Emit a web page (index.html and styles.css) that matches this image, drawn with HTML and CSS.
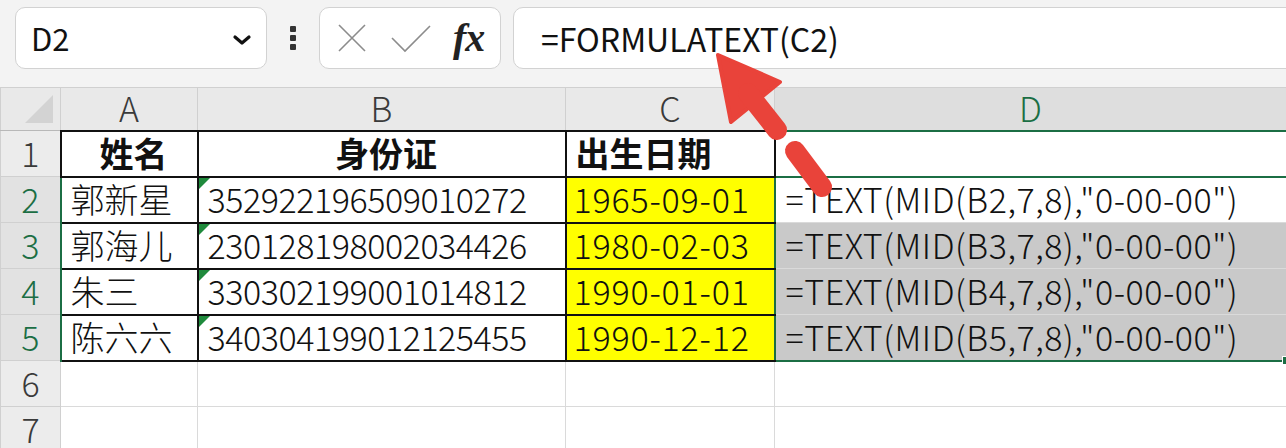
FILE: index.html
```html
<!DOCTYPE html>
<html>
<head>
    <meta charset="UTF-8">
    <title>FORMULATEXT</title>
    <link rel="stylesheet" href="styles.css">
</head>
<body>
    <div class="toolbar">
        <div class="name-box">
            <span class="cell-ref">D2</span>
            <svg class="chevron" width="20" height="12" viewBox="0 0 20 12">
                <path d="M3 3 L10 9 L17 3" fill="none" stroke="#111" stroke-width="3.2" stroke-linecap="round" stroke-linejoin="round"/>
            </svg>
        </div>
        <div class="more">
            <span></span><span></span><span></span>
        </div>
        <div class="fx-box">
            <svg class="icon-cancel" width="30" height="30" viewBox="0 0 30 30">
                <path d="M2 2 L28 28 M28 2 L2 28" stroke="#8c8c8c" stroke-width="1.6" fill="none"/>
            </svg>
            <svg class="icon-enter" width="40" height="28" viewBox="0 0 40 28">
                <path d="M1 13 L14 26 L39 1" stroke="#8c8c8c" stroke-width="1.6" fill="none"/>
            </svg>
            <span class="fx">fx</span>
        </div>
        <div class="formula-box">=FORMULATEXT(C2)</div>
    </div>

    <table class="sheet">
        <colgroup>
            <col class="col-rowhead">
            <col class="col-a">
            <col class="col-b">
            <col class="col-c">
            <col class="col-d">
        </colgroup>
        <tr class="col-heads">
            <th class="corner"><span class="corner-tri"></span></th>
            <th>A</th>
            <th>B</th>
            <th>C</th>
            <th class="head-sel">D</th>
        </tr>
        <tr>
            <th class="row-head">1</th>
            <td class="t bold center">姓名</td>
            <td class="t bold center">身份证</td>
            <td class="t bold">出生日期</td>
            <td></td>
        </tr>
        <tr>
            <th class="row-head row-sel">2</th>
            <td class="t">郭新星</td>
            <td class="t num-text">352922196509010272</td>
            <td class="t date">1965-09-01</td>
            <td class="sel sel-top">=TEXT(MID(B2,7,8),"0-00-00")</td>
        </tr>
        <tr>
            <th class="row-head row-sel">3</th>
            <td class="t">郭海儿</td>
            <td class="t num-text">230128198002034426</td>
            <td class="t date">1980-02-03</td>
            <td class="sel shade">=TEXT(MID(B3,7,8),"0-00-00")</td>
        </tr>
        <tr>
            <th class="row-head row-sel">4</th>
            <td class="t">朱三</td>
            <td class="t num-text">330302199001014812</td>
            <td class="t date">1990-01-01</td>
            <td class="sel shade">=TEXT(MID(B4,7,8),"0-00-00")</td>
        </tr>
        <tr>
            <th class="row-head row-sel">5</th>
            <td class="t">陈六六</td>
            <td class="t num-text">340304199012125455</td>
            <td class="t date">1990-12-12</td>
            <td class="sel shade sel-bottom">=TEXT(MID(B5,7,8),"0-00-00")</td>
        </tr>
        <tr>
            <th class="row-head">6</th>
            <td></td><td></td><td></td><td></td>
        </tr>
        <tr>
            <th class="row-head">7</th>
            <td></td><td></td><td></td><td></td>
        </tr>
    </table>

    <svg class="arrow" width="1286" height="448" viewBox="0 0 1286 448">
        <polygon points="718,55 780,82 731,122" fill="#e9433a" stroke="#e9433a" stroke-width="4" stroke-linejoin="round"/>
        <line x1="748" y1="93" x2="777" y2="130" stroke="#e9433a" stroke-width="20" stroke-linecap="round"/>
        <line x1="795" y1="151" x2="822" y2="187" stroke="#e9433a" stroke-width="20" stroke-linecap="round"/>
    </svg>
</body>
</html>
```

FILE: styles.css
```css
body {
    margin: 0;
    width: 1286px;
    height: 448px;
    overflow: hidden;
    position: relative;
    background-color: #f3f3f3;
    font-family: "Noto Sans CJK SC", "Noto Sans", sans-serif;
    font-weight: 300;
    color: #111;
}
.toolbar {
    height: 87px;
    box-sizing: border-box;
    padding: 7px 0 0 15px;
    display: flex;
    align-items: flex-start;
    background-color: #f3f3f3;
}
.name-box {
    width: 252px;
    height: 62px;
    box-sizing: border-box;
    padding: 0 14px 0 15px;
    display: flex;
    align-items: center;
    justify-content: space-between;
    background-color: white;
    border: 1px solid #d2d2d2;
    border-radius: 10px;
}
.cell-ref {
    font-size: 31px;
    line-height: 1.2;
    font-weight: 400;
}
.chevron {
    margin-top: 3px;
}
.more {
    width: 52px;
    height: 62px;
    display: flex;
    flex-direction: column;
    align-items: center;
    justify-content: center;
    gap: 3px;
}
.more span {
    width: 6px;
    height: 6px;
    border-radius: 1px;
    background-color: #333;
}
.fx-box {
    width: 182px;
    height: 62px;
    box-sizing: border-box;
    padding: 0 12px 0 17px;
    display: flex;
    align-items: center;
    background-color: white;
    border: 1px solid #d2d2d2;
    border-radius: 10px;
}
.icon-cancel {
    margin-right: 24px;
}
.icon-enter {
    margin-right: 22px;
    margin-top: 2px;
}
.fx {
    font-family: "Liberation Serif", serif;
    font-style: italic;
    font-weight: bold;
    font-size: 40px;
    color: #222;
    letter-spacing: -1px;
    line-height: 1.1;
}
.formula-box {
    flex: 1;
    margin-left: 12px;
    margin-right: -20px;
    height: 62px;
    box-sizing: border-box;
    padding-left: 27px;
    display: flex;
    align-items: center;
    font-size: 32px;
    font-weight: 400;
    background-color: white;
    border: 1px solid #d2d2d2;
    border-radius: 10px;
}

.sheet {
    width: 1286px;
    table-layout: fixed;
    border-collapse: collapse;
    background-color: white;
    font-size: 34px;
}
.col-rowhead { width: 60px; }
.col-a { width: 137px; }
.col-b { width: 368px; }
.col-c { width: 209px; }
.col-d { width: 512px; }

.sheet tr {
    height: 46px;
}
.sheet tr.col-heads {
    height: 43px;
}
.sheet th {
    font-weight: 300;
    color: #3a3a3a;
    background-color: #ececec;
    border: 1px solid #d0d0d0;
    padding: 0;
    line-height: 1.2;
}
.col-heads th {
    font-size: 34px;
    background-color: #e9e9e9;
    border-bottom: 1px solid #b8b8b8;
}
.col-heads th.head-sel {
    color: #1b6e44;
    background-color: #dedede;
    border-bottom: 2px solid #1b6e44;
}
.corner {
    position: relative;
}
.corner-tri {
    position: absolute;
    right: 7px;
    bottom: 7px;
    width: 0;
    height: 0;
    border-left: 28px solid transparent;
    border-bottom: 28px solid #d3d3d3;
}
.row-head {
    font-size: 34px;
    text-align: center;
    border-right: 1px solid #b8b8b8;
}
.sheet th.row-sel {
    color: #1b6e44;
    background-color: #e2e2e2;
    border-right: 2px solid #1b6e44;
}
.sheet td {
    border: 1px solid #dadada;
    padding: 0 0 0 9px;
    white-space: nowrap;
    line-height: 1.2;
}
.sheet td.t {
    border: 2px solid #111;
}
.bold {
    font-weight: bold;
}
.center {
    text-align: center;
    padding-left: 0;
}
.num-text {
    position: relative;
    letter-spacing: -0.45px;
}
.num-text::before {
    content: "";
    position: absolute;
    left: 0;
    top: 0;
    border-top: 11px solid #1f8a3c;
    border-right: 11px solid transparent;
}
.sheet td.date {
    background-color: #ffff00;
    border-right-style: none;
    padding-left: 7px;
    letter-spacing: 0.8px;
}
.sheet td.sel {
    border-left: 2px solid #1b6e44;
    border-right: 2px solid #1b6e44;
    padding-left: 10px;
    letter-spacing: 0.55px;
}
.sheet td.sel-top {
    border-top: 2px solid #1b6e44;
}
.sheet td.shade {
    background-color: #c9c9c9;
    border-top-color: #dcdcdc;
}
.sheet td.sel-bottom {
    position: relative;
    border-bottom: 2px solid #1b6e44;
}
.sel-bottom::after {
    content: "";
    position: absolute;
    right: -5px;
    bottom: -5px;
    width: 7px;
    height: 7px;
    background-color: #1b6e44;
    border: 1px solid white;
}
.arrow {
    position: absolute;
    left: 0;
    top: 0;
    pointer-events: none;
}
```
